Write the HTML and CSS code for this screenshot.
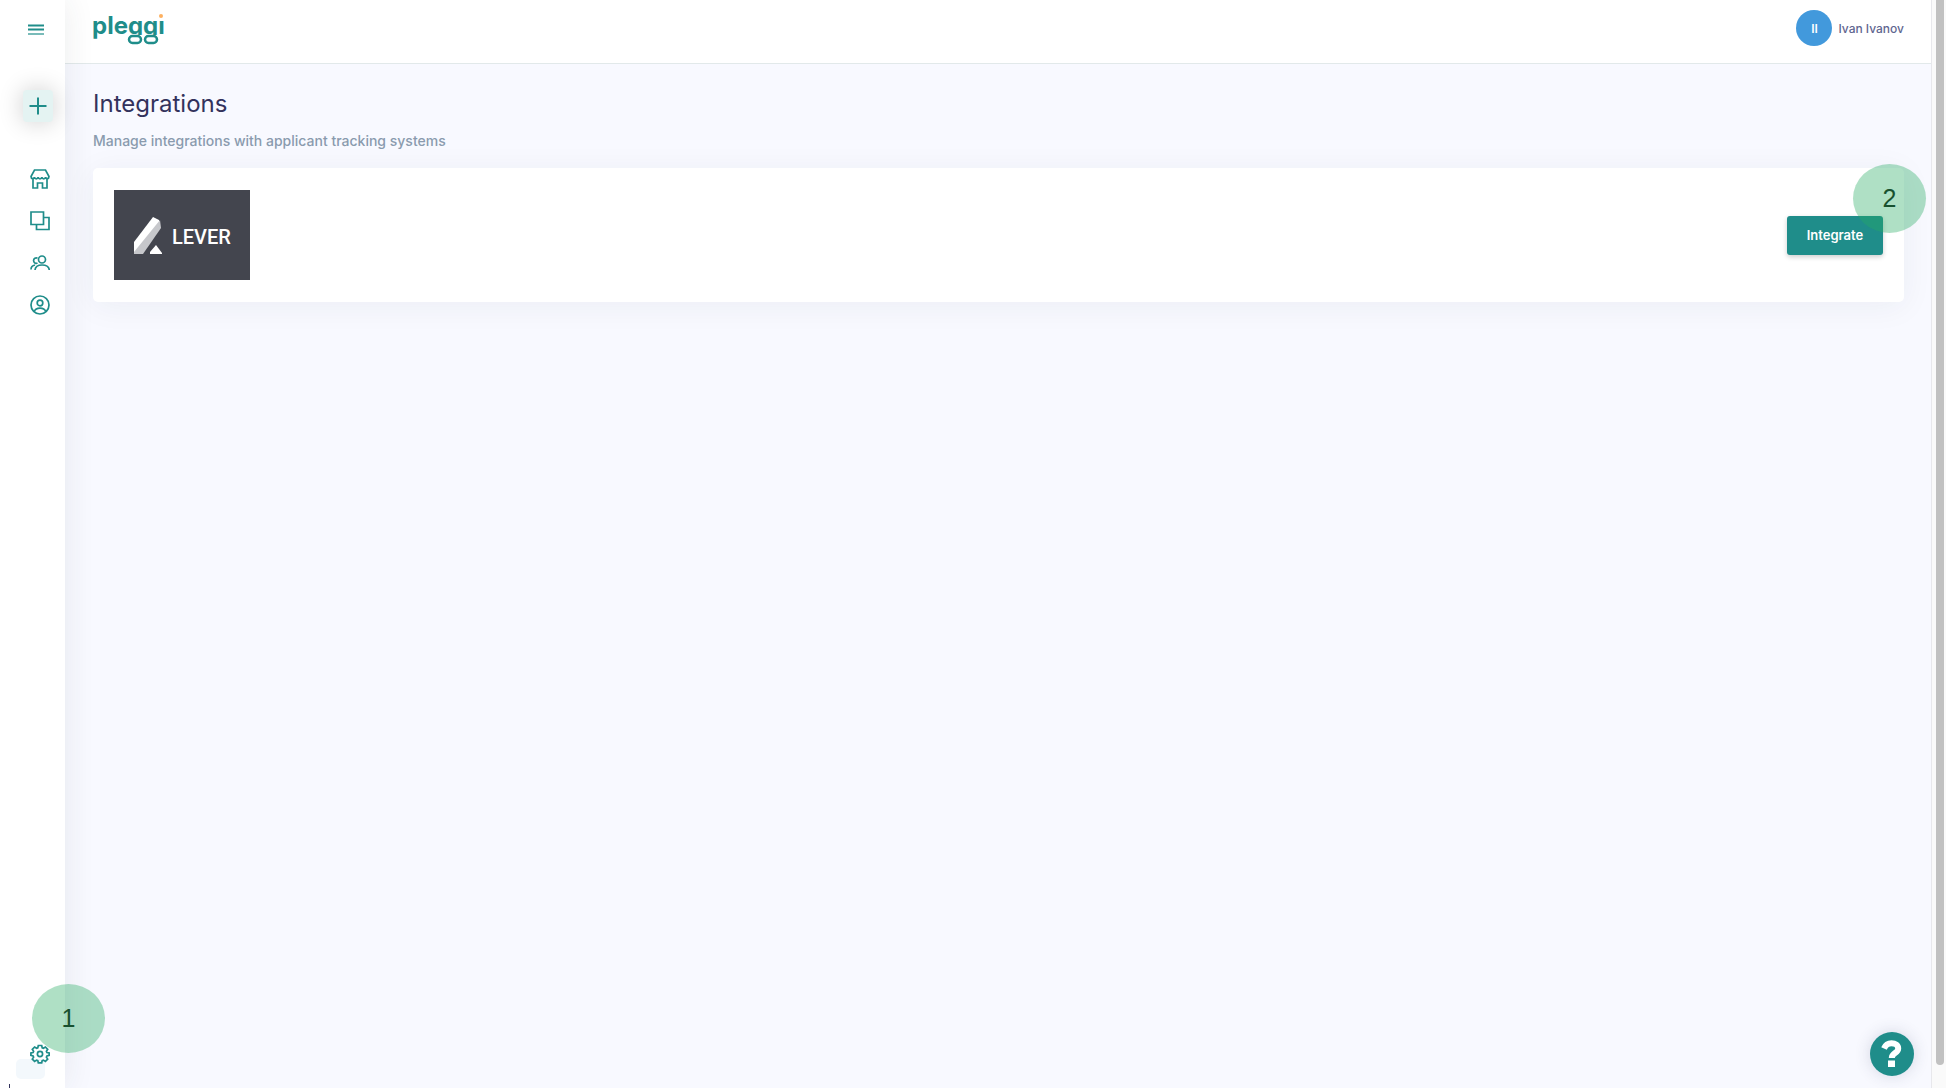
FILE: index.html
```html
<!DOCTYPE html>
<html lang="en">
<head>
<meta charset="utf-8">
<meta name="viewport" content="width=device-width, initial-scale=1">
<title>Integrations - pleggi</title>
<link rel="stylesheet" href="styles.css">
</head>
<body>
<div class="app">
  <nav class="sidebar" aria-label="Main">
    <button class="icon-button menu" type="button" aria-label="Menu">
      <svg width="18" height="12" viewBox="0 0 18 12"><path d="M1 1.500h16M1 5.500h16" /><path stroke-opacity=".6" d="M1 10h16" /></svg>
    </button>
    <button class="icon-button create" type="button" aria-label="Create">
      <svg width="18" height="18" viewBox="0 0 18 18"><path d="M9 .5v17M.5 9h17" /></svg>
    </button>
    <a class="nav-link" href="#company" aria-label="Company">
      <svg width="20" height="20" viewBox="0 0 20 20"><path d="M4.500 1h11L19 7.500c0 2.600-3 2.600-3.400.8-.5 2-3.200 2-3.700 0-.5 2-3.300 2-3.800 0-.5 2-3.200 2-3.700 0C4 10.100 1 10.100 1 7.500zM3 10v9h4.500v-5h5v5H17v-9" /></svg>
    </a>
    <a class="nav-link" href="#jobs" aria-label="Jobs">
      <svg width="20" height="20" viewBox="0 0 20 20"><path d="M1 1h12.500v12.500H1zM13.500 6.500H19V18.500H6.500v-5" /></svg>
    </a>
    <a class="nav-link" href="#people" aria-label="People">
      <svg width="20" height="20" viewBox="0 0 20 20"><circle cx="12" cy="6.500" r="3.500" /><path d="M7.500 5.200a2.700 2.700 0 1 0 0 4.800M5 17c.3-3.500 3-5 7-5s7 1.500 7.300 5M1 16.500c0-2.500 1.500-4 4-4.500" /></svg>
    </a>
    <a class="nav-link" href="#profile" aria-label="Profile">
      <svg width="20" height="20" viewBox="0 0 20 20"><circle cx="10" cy="10" r="9" /><circle cx="10" cy="8" r="2.800" /><path d="M4.200 16.500c1-2.400 3-3.300 5.800-3.300s4.800.9 5.800 3.300" /></svg>
    </a>
    <a class="nav-link settings" href="#settings" aria-label="Settings">
      <svg width="20" height="20" viewBox="0 0 20 20"><path d="M8.300 1.500h3.400l.5 2.300 1.200.5 2-1.300 2.300 2.300-1.300 2 .5 1.200 2.300.5v2.300l-2.300.6-.5 1.200 1.300 2-2.300 2.300-2-1.300-1.200.5-.5 2.200H8.300l-.5-2.200-1.200-.5-2 1.300-2.300-2.300 1.300-2-.5-1.200L.9 11.300V9l2.200-.5.5-1.200-1.300-2L4.600 3l2 1.300 1.200-.5z" /><circle cx="10" cy="10" r="2.600" /></svg>
    </a>
    <span class="status-chip"></span>
    <span class="status-mark"></span>
    <span class="step step-one">1</span>
  </nav>

  <div class="page">
    <header class="topbar">
      <a class="brand" href="#home" aria-label="pleggi home">
        <svg width="72" height="36" viewBox="0 0 72 36">
          <defs><clipPath id="word"><path d="M0 0H63V10.500H72V25H15V36H0z" /></clipPath></defs>
          <text class="brand-word" x="-1" y="24" clip-path="url(#word)">pleggi</text>
          <rect class="brand-loop" x="36" y="26" width="12" height="7" rx="3.500" />
          <rect class="brand-loop" x="52" y="26" width="12" height="7" rx="3.500" />
          <circle class="brand-dot" cx="68" cy="6" r="2" />
        </svg>
      </a>
      <div class="user"><span class="avatar">II</span><span>Ivan Ivanov</span></div>
    </header>
    <main class="content">
      <h1>Integrations</h1>
      <p class="lead">Manage integrations with applicant tracking systems</p>
      <section class="card" aria-label="Lever">
        <div class="lever">
          <svg width="28" height="37" viewBox="0 0 28 37"><path fill="#fff" d="M0 25 19 0l6 3v5L0 36z" /><path fill="#c6c7cb" d="M26 3l1 8L9 37H0v-2z" /><path fill="#fff" d="M22 28l6 8v1H16v-2z" /></svg>
          <span class="lever-name">LEVER</span>
        </div>
        <button class="integrate" type="button">Integrate</button>
        <span class="step step-two">2</span>
      </section>
    </main>
    <button class="help" type="button" aria-label="Help">
      <svg width="24" height="30" viewBox="0 0 24 30"><path d="M4 9.500C5.500 6 8 4.300 11.500 4.300c4 0 6.700 2 6.700 5.200 0 5-6.400 4.200-6.400 9.500" /><rect x="8" y="21.500" width="7" height="6.500" /></svg>
    </button>
  </div>
  <div class="scroll-track"><div class="scroll-thumb"></div></div>
</div>
</body>
</html>
```
FILE: styles.css
```css
* { box-sizing: border-box; }
body {
  margin: 0;
  background: #f8f9ff;
  color: #33325c;
  font-family: Inter, "Liberation Sans", sans-serif;
}
button { border: 0; padding: 0; font: inherit; cursor: pointer; }
.app { display: flex; min-height: 100vh; overflow: hidden; }

.sidebar {
  position: relative;
  z-index: 1;
  display: flex;
  flex-direction: column;
  flex: 0 0 65px;
  padding: 16px 0 24px 23px;
  background: #fff;
  box-shadow: 0 0 32px rgba(40, 50, 70, .09);
}
.sidebar svg { display: block; fill: none; stroke: #1f8d8a; stroke-width: 2; }
.icon-button { display: grid; place-items: center; width: 30px; background: none; }
.menu { width: 26px; height: 27px; }
.create {
  height: 32px;
  margin: 47px 0 47px;
  border-radius: 4px;
  background: #e4f3f2;
  box-shadow: 0 0 24px rgba(0, 0, 0, .2);
}
.nav-link { display: block; margin-bottom: 22px; padding-left: 7px; }
.sidebar .nav-link svg { stroke-width: 1.700; }
.settings { position: relative; margin: auto 0 0; z-index: 1; }
.status-chip {
  position: absolute;
  left: 16px;
  bottom: 9px;
  width: 29px;
  height: 20px;
  border-radius: 5px;
  background: #f3f8fc;
}
.status-mark {
  position: absolute;
  left: 9px;
  bottom: 0;
  width: 1px;
  height: 4px;
  background: #33325c;
}

.step {
  position: absolute;
  z-index: 3;
  display: grid;
  place-items: center;
  width: 73px;
  height: 69px;
  border-radius: 50%;
  background: rgba(39, 171, 98, .37);
  color: #18512f;
  font: 25px "Liberation Sans", sans-serif;
  pointer-events: none;
}
.step-one { left: 32px; bottom: 35px; }
.step-two { right: -22px; top: -4px; }

.page { position: relative; display: flex; flex: 1; flex-direction: column; min-width: 0; }
.topbar {
  display: flex;
  align-items: flex-start;
  justify-content: space-between;
  height: 64px;
  padding: 10px 27px 0 28px;
  border-bottom: 1px solid #e2e9ea;
  background: #fff;
}
.brand svg { display: block; }
.brand-word { fill: #1f8d8a; font: 700 24px Inter, sans-serif; }
.brand-loop { fill: none; stroke: #1f8d8a; stroke-width: 2.500; }
.brand-dot { fill: #fdb060; }
.user { display: flex; align-items: center; gap: 6px; color: #5f6690; font-size: 12px; font-weight: 500; }
.avatar {
  display: grid;
  place-items: center;
  width: 36px;
  height: 36px;
  border-radius: 50%;
  background: #4299dc;
  color: #fff;
  font-weight: 600;
}

.content { padding: 24px 27px 24px 28px; }
h1 { margin: 0; font-size: 24px; font-weight: 400; line-height: 32px; }
.lead { margin: 10px 0 17px; color: #8a9bae; font-size: 14px; font-weight: 500; line-height: 21px; }
.card {
  position: relative;
  display: flex;
  align-items: center;
  justify-content: space-between;
  padding: 22px 21px;
  border-radius: 5px;
  background: #fff;
  box-shadow: 0 4px 32px rgba(40, 50, 70, .06);
}
.lever {
  display: flex;
  align-items: center;
  gap: 10px;
  width: 136px;
  height: 90px;
  padding-left: 20px;
  background: #43454e;
  color: #fff;
  font: 500 20px Roboto, sans-serif;
}
.lever-name { padding-top: 4px; }
.integrate {
  width: 96px;
  height: 39px;
  border-radius: 3px;
  background: #1f8d8a;
  box-shadow: 0 2px 5px rgba(0, 0, 0, .2);
  color: #fff;
  font-size: 13px;
  font-weight: 600;
}
.help {
  position: absolute;
  right: 17px;
  bottom: 12px;
  display: grid;
  place-items: center;
  width: 44px;
  height: 44px;
  border-radius: 50%;
  background: #1f8d8a;
  box-shadow: 0 0 16px rgba(50, 60, 100, .18);
}
.help path { fill: none; stroke: #fff; stroke-width: 6; }
.help rect { fill: #fff; }

.scroll-track {
  flex: 0 0 15px;
  padding: 0 2px 23px 4px;
  border-left: 1px solid #e8e8ec;
  background: #fafafa;
}
.scroll-thumb { height: 100%; border-radius: 0 0 4px 4px; background: #c1c1c1; }
```
